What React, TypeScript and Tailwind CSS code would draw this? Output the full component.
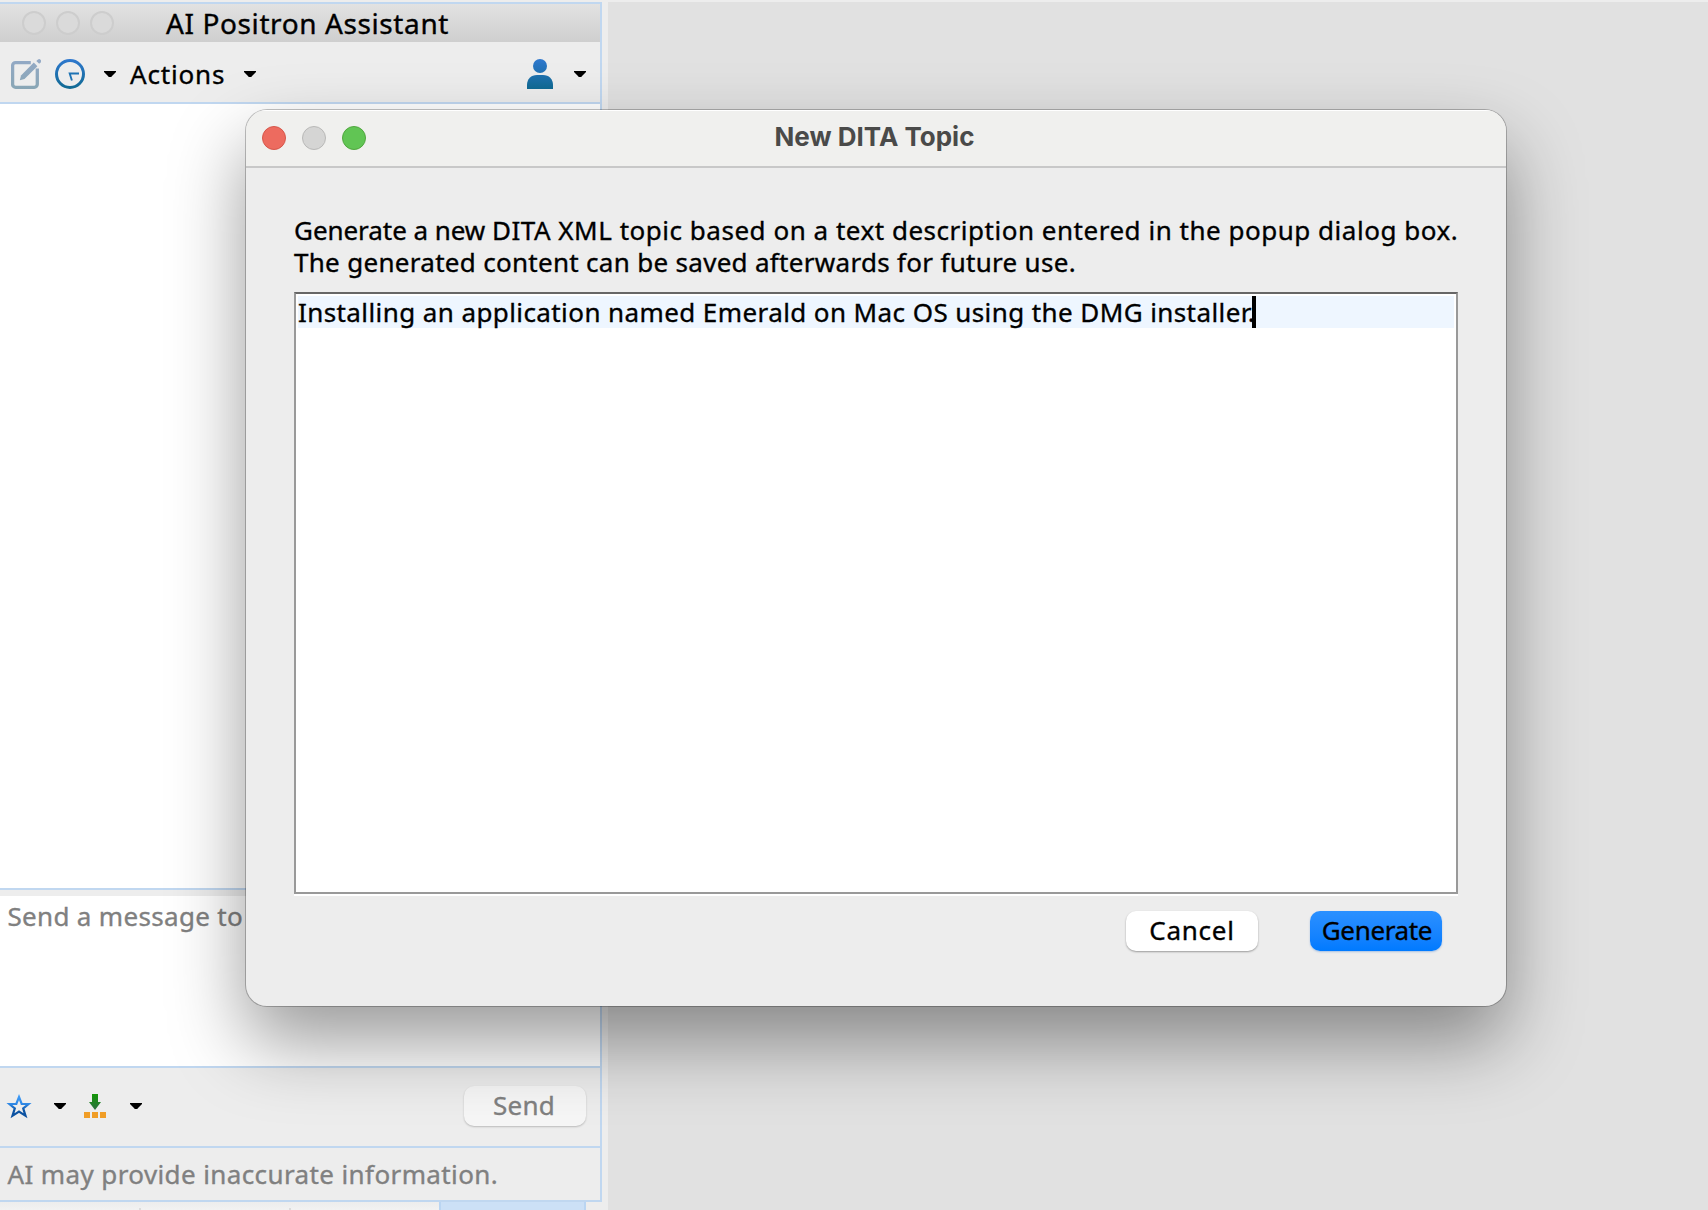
function Caret({ className = "" }: { className?: string }) {
  return (
    <svg className={"h-1.5 w-3 shrink-0 " + className} viewBox="0 0 12 6">
      <path d="M0 0H12V1L7.5 5.5V6H4.5V5.5L0 1Z" fill="#000" />
    </svg>
  );
}

function EditIcon() {
  return (
    <svg className="size-[30px] shrink-0" viewBox="0 0 30 30" fill="none">
      <defs>
        <linearGradient id="edit" x1="0" y1="0" x2="0" y2="30" gradientUnits="userSpaceOnUse">
          <stop stopColor="#93a9c6" />
          <stop offset="1" stopColor="#89a6b5" />
        </linearGradient>
      </defs>
      <path
        d="M19.8 3.6H4.600A3 3 0 0 0 1.600 6.600V25.300A3 3 0 0 0 4.600 28.300H23.300A3 3 0 0 0 26.300 25.300V9.500"
        stroke="url(#edit)"
        strokeWidth="3.300"
      />
      <path d="M8.800 21.300L10 16.500L22.800 3.600L26.400 7.200L13.500 20Z" fill="url(#edit)" />
      <path d="M25.300 1.900L27 0.400Q28.500 -0.300 29.500 0.700Q30.500 1.800 29.700 3.200L28.200 4.800Z" fill="url(#edit)" />
    </svg>
  );
}

function ClockIcon() {
  return (
    <svg className="size-[30px] shrink-0" viewBox="0 0 30 30" fill="none">
      <defs>
        <linearGradient id="clock" x1="0" y1="0" x2="0" y2="30" gradientUnits="userSpaceOnUse">
          <stop stopColor="#2f78cf" />
          <stop offset="1" stopColor="#106a92" />
        </linearGradient>
      </defs>
      <circle cx="15" cy="15" r="13.500" stroke="url(#clock)" strokeWidth="3" />
      <path d="M24 14.500H14.700L16.900 21.500" stroke="#1e73b4" strokeWidth="1.900" />
    </svg>
  );
}

function UserIcon() {
  return (
    <svg className="h-[30px] w-[26px] shrink-0" viewBox="0 0 26 30">
      <defs>
        <linearGradient id="user" x1="0" y1="0" x2="0" y2="30" gradientUnits="userSpaceOnUse">
          <stop stopColor="#2f78cf" />
          <stop offset="1" stopColor="#106a92" />
        </linearGradient>
      </defs>
      <circle cx="13" cy="7" r="7" fill="url(#user)" />
      <path d="M0 30V26C0 20 4 16 10 16H16C22 16 26 20 26 26V30Z" fill="url(#user)" />
    </svg>
  );
}

function StarIcon() {
  return (
    <svg className="h-[26px] w-[28px] shrink-0" viewBox="0 0 28 26" fill="none">
      <defs>
        <linearGradient id="star" x1="0" y1="2" x2="0" y2="25" gradientUnits="userSpaceOnUse">
          <stop stopColor="#3f9cf8" />
          <stop offset="0.400" stopColor="#2f88e6" />
          <stop offset="0.650" stopColor="#0d55a5" />
          <stop offset="1" stopColor="#0b4f9e" />
        </linearGradient>
      </defs>
      <path
        d="M14 4L16.700 10.800L23.600 11L18.200 15.400L20.500 22.800L14 18.600L7.500 22.800L9.800 15.400L4.400 11L11.300 10.800Z"
        stroke="url(#star)"
        strokeWidth="2.200"
      />
    </svg>
  );
}

function InsertIcon() {
  return (
    <svg className="h-6 w-[22px] shrink-0" viewBox="0 0 22 24">
      <defs>
        <linearGradient id="arrow" x1="0" y1="0" x2="0" y2="16" gradientUnits="userSpaceOnUse">
          <stop stopColor="#149708" />
          <stop offset="1" stopColor="#2b7040" />
        </linearGradient>
      </defs>
      <path d="M8 0H14V8H17L11 16L5 8H8Z" fill="url(#arrow)" />
      <path d="M0 18H6V24H0ZM8 18H14V24H8ZM16 18H22V24H16Z" fill="#f09d26" />
    </svg>
  );
}

function AssistantPanel() {
  return (
    <section className="flex h-[1210px] w-[608px] shrink-0 flex-col bg-[#ededed] pt-0.5">
      <div className="flex h-[1200px] w-[602px] shrink-0 flex-col border-y-2 border-r-2 border-[#c0d7f0]">
        <header className="flex h-[38px] shrink-0 items-center bg-linear-to-b from-[#e2e2e2] to-[#cfcfcf] pl-[22px]">
          <div className="flex gap-2.5">
            <span className="size-6 rounded-full border-2 border-[#cdcdcd] bg-[#dadada]" />
            <span className="size-6 rounded-full border-2 border-[#cdcdcd] bg-[#dadada]" />
            <span className="size-6 rounded-full border-2 border-[#cdcdcd] bg-[#dadada]" />
          </div>
          <h1 className="ml-[52px] text-[28px] leading-[38px] tracking-[0.6px]">AI Positron Assistant</h1>
        </header>
        <div className="flex h-[62px] shrink-0 items-center border-b-2 border-[#c0d7f0] pt-1 pl-[11px]">
          <EditIcon />
          <span className="ml-3.5 flex"><ClockIcon /></span>
          <Caret className="ml-[19px]" />
          <span className="ml-[14px] w-[96px] leading-8 tracking-[0.83px]">Actions</span>
          <Caret className="ml-[18px]" />
          <span className="ml-auto flex"><UserIcon /></span>
          <Caret className="mr-[14px] ml-[21px]" />
        </div>
        <div className="h-[784px] shrink-0 bg-white" />
        <div className="h-2 shrink-0 border-t-2 border-[#c0d7f0]" />
        <div className="h-[170px] shrink-0 bg-white pt-1 pl-[7.5px] leading-8 tracking-[0.32px] text-[#808080]">Send a message to</div>
        <div className="flex h-[82px] shrink-0 items-center border-y-2 border-[#c0d7f0] pb-0.5 pl-[5px]">
          <StarIcon />
          <Caret className="ml-[21px]" />
          <span className="ml-[18px] flex"><InsertIcon /></span>
          <Caret className="ml-6" />
          <button className="mr-[14px] ml-auto flex h-10 w-[122px] items-center justify-center rounded-[10px] bg-[#f6f6f6] pr-0.5 pb-[3px] leading-8 tracking-[0.3px] text-[#808080] shadow-[0_1px_2px_rgba(0,0,0,0.22)]">Send</button>
        </div>
        <p className="pt-[10px] pl-[7.5px] leading-8 tracking-[0.39px] text-[#808080]">AI may provide inaccurate information.</p>
      </div>
      <div className="flex h-2 shrink-0">
        <div className="flex w-[439px] items-end bg-linear-to-b from-[#ededed] to-[#f2f2f2]">
          <span className="ml-[139px] h-0.5 w-0.5 bg-[#dcdcdc]" />
          <span className="ml-[148px] h-0.5 w-0.5 bg-[#dcdcdc]" />
        </div>
        <div className="w-[147px] border-x-2 border-[#bad5f2] bg-[#cce0f6]" />
      </div>
    </section>
  );
}

function TopicDialog() {
  return (
    <section className="absolute top-[110px] left-[246px] flex h-[896px] w-[1260px] flex-col overflow-hidden rounded-[21px] bg-[#ededed] shadow-[0_0_0_1px_rgba(0,0,0,0.24),0_36px_76px_rgba(0,0,0,0.4)]">
      <header className="flex h-[58px] shrink-0 items-center border-t border-b-2 border-t-white border-b-[#c8c8c8] bg-[#f0f0ee] pb-px pl-4">
        <div className="flex w-[134px] gap-4">
          <span className="size-6 rounded-full border border-[#d6574b] bg-[#ed6b5f]" />
          <span className="size-6 rounded-full border border-[#b9b9b8] bg-[#d5d5d4]" />
          <span className="size-6 rounded-full border border-[#51a73f] bg-[#61c554]" />
        </div>
        <h2 className="flex-1 pr-[153px] pb-0.5 text-center font-['Inter',sans-serif] text-[26px] leading-[50px] font-bold text-[#4a4a49] [-webkit-text-stroke:0]">New DITA Topic</h2>
      </header>
      <div className="flex flex-1 flex-col px-12 pt-[46px]">
        <p className="whitespace-nowrap leading-8 tracking-[0.3px]">
          <span className="tracking-[-0.05px]">Generate a new </span>
          <span className="tracking-[0.52px]">DITA XML topic based on a text description entered in the popup dialog box.</span>
          <br />
          The generated content can be saved afterwards for future use.
        </p>
        <div className="mt-[14px] h-[604px] border-b-2 border-white">
          <div className="h-[602px] border-2 border-[#999] border-t-[#666] bg-white p-0.5">
            <div className="flex h-8 bg-[#eef6ff]">
              <span className="w-[954px] whitespace-nowrap leading-8 tracking-[0.41px]">Installing an application named Emerald on Mac OS using the DMG installer.</span>
              <span className="z-10 w-1 bg-black" />
            </div>
          </div>
        </div>
        <div className="mt-[15px] flex justify-end gap-[52px] pr-4">
          <button className="h-10 w-[132px] rounded-[10px] bg-white pb-0.5 leading-8 tracking-[0.75px] shadow-[0_1px_2px_rgba(0,0,0,0.35)]">Cancel</button>
          <button className="h-10 w-[132px] rounded-[10px] bg-linear-to-b from-[#2a90ff] to-[#007aff] pb-0.5 pl-0.5 leading-8 tracking-[-0.35px] shadow-[0_1px_2px_rgba(0,90,200,0.3)]">Generate</button>
        </div>
      </div>
    </section>
  );
}

export default function App() {
  return (
    <main className="relative flex h-[1210px] w-[1708px] overflow-hidden bg-[#ededed] font-['Noto_Sans',sans-serif] text-[26px] text-black [-webkit-text-stroke:0.35px]">
      <AssistantPanel />
      <div className="mt-0.5 flex-1 bg-[#e1e1e1]" />
      <TopicDialog />
    </main>
  );
}
